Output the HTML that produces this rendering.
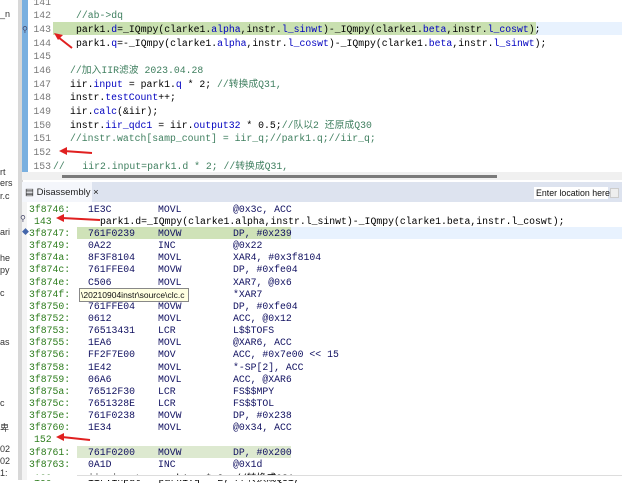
<!DOCTYPE html>
<html><head><meta charset="utf-8"><style>
*{margin:0;padding:0;box-sizing:border-box}
body{width:622px;height:480px;overflow:hidden;background:#fff;position:relative;font-family:"Liberation Mono","Noto Sans CJK SC",monospace;font-size:9.8px;line-height:13px}
.a{position:absolute;white-space:pre;line-height:13px;height:13px}
.ln{color:#787878;width:26px;text-align:right;left:25px}
.b{color:#0000c0}.c{color:#3f7f5f}
.ad{color:#2e7d1e;left:29px}
.op{left:88px;color:#101060}.mn{left:158px;color:#101060}.or{left:233px;color:#101060}
.lt{font-family:"Liberation Sans",sans-serif;font-size:9px;color:#333;left:0}
.bg{height:auto}
</style></head><body>
<div class="a bg" style="left:0;top:0;width:20px;height:480px;background:#fff"></div>
<div class="a bg" style="left:18px;top:0;width:5px;height:480px;background:#d8d8d8"></div>
<div class="a lt" style="top:8px">_n</div>
<div class="a lt" style="top:166px">rt</div>
<div class="a lt" style="top:177px">ers</div>
<div class="a lt" style="top:190px">r.c</div>
<div class="a lt" style="top:226px">ari</div>
<div class="a lt" style="top:252px">he</div>
<div class="a lt" style="top:264px">py</div>
<div class="a lt" style="top:287px">c</div>
<div class="a lt" style="top:336px">as</div>
<div class="a lt" style="top:397px">c</div>
<div class="a lt" style="top:422px">卑</div>
<div class="a lt" style="top:443px">02</div>
<div class="a lt" style="top:455px">02</div>
<div class="a lt" style="top:467px">1:</div>
<!-- editor -->
<div class="a bg" style="left:22px;top:0;width:6px;height:172px;background:#7ab0e0"></div>
<div class="a bg" style="left:53px;top:22px;width:569px;height:13px;background:#e8f2fe"></div>
<div class="a bg" style="left:53px;top:22px;width:483px;height:13px;background:#c9e0b0"></div>
<div class="a ln" style="top:-4px">141</div>
<div class="a ln" style="top:9px">142</div>
<div class="a ln" style="top:23px">143</div>
<div class="a ln" style="top:37px">144</div>
<div class="a ln" style="top:50px">145</div>
<div class="a ln" style="top:64px">146</div>
<div class="a ln" style="top:78px">147</div>
<div class="a ln" style="top:91px">148</div>
<div class="a ln" style="top:105px">149</div>
<div class="a ln" style="top:119px">150</div>
<div class="a ln" style="top:132px">151</div>
<div class="a ln" style="top:146px">152</div>
<div class="a ln" style="top:160px">153</div>
<div class="a" style="left:22px;top:24px;font-size:8px;color:#446">⚲</div>
<div class="a c" style="left:76px;top:9px">//ab-&gt;dq</div>
<div class="a" style="left:76px;top:23px">park1.<span class="b">d</span>=_IQmpy(clarke1.<span class="b">alpha</span>,instr.<span class="b">l_sinwt</span>)-_IQmpy(clarke1.<span class="b">beta</span>,instr.<span class="b">l_coswt</span>);</div>
<div class="a" style="left:76px;top:37px">park1.<span class="b">q</span>=-_IQmpy(clarke1.<span class="b">alpha</span>,instr.<span class="b">l_coswt</span>)-_IQmpy(clarke1.<span class="b">beta</span>,instr.<span class="b">l_sinwt</span>);</div>
<div class="a c" style="left:70px;top:64px">//加入IIR滤波 2023.04.28</div>
<div class="a" style="left:70px;top:78px">iir.<span class="b">input</span> = park1.<span class="b">q</span> * 2; <span class="c">//转换成Q31,</span></div>
<div class="a" style="left:70px;top:91px">instr.<span class="b">testCount</span>++;</div>
<div class="a" style="left:70px;top:105px">iir.<span class="b">calc</span>(&amp;iir);</div>
<div class="a" style="left:70px;top:119px">instr.<span class="b">iir_qdc1</span> = iir.<span class="b">output32</span> * 0.5;<span class="c">//队以2 还原成Q30</span></div>
<div class="a c" style="left:70px;top:132px">//instr.watch[samp_count] = iir_q;//park1.q;//iir_q;</div>
<div class="a c" style="left:53px;top:160px">//   iir2.input=park1.d * 2; //转换成Q31,</div>
<div class="a bg" style="left:22px;top:172px;width:600px;height:8px;background:#f0f0f0"></div>
<div class="a bg" style="left:62px;top:175px;width:435px;height:3px;background:#7a7a7a"></div>
<!-- disassembly tab -->
<div class="a bg" style="left:22px;top:182px;width:600px;height:20px;background:#dde3ef"></div>
<div class="a bg" style="left:22px;top:182px;width:70px;height:20px;background:#f4f6fb"></div>
<div class="a" style="left:25px;top:186px;font-family:'Liberation Sans',sans-serif;font-size:9.5px;color:#222">▤ Disassembly ×</div>
<div class="a" style="left:534px;top:187px;width:74px;height:12px;background:#fff;font-family:'Liberation Sans',sans-serif;font-size:8.8px;color:#111;padding-left:2px;line-height:12px">Enter location here</div>
<div class="a bg" style="left:610px;top:188px;width:9px;height:10px;background:#eee;border:1px solid #ccc"></div>
<div class="a bg" style="left:22px;top:202px;width:600px;height:278px;background:#fff"></div>
<div class="a bg" style="left:22px;top:202px;width:5px;height:278px;background:#f4f4f4"></div>
<!-- rows -->
<div class="a bg" style="left:77px;top:227px;width:545px;height:12px;background:#e8f2fe"></div>
<div class="a bg" style="left:77px;top:227px;width:214px;height:12px;background:#cfe2b8"></div>
<div class="a bg" style="left:77px;top:446px;width:214px;height:12px;background:#dde9d0"></div>
<div class="a" style="left:22px;top:227px;font-size:7px;color:#46a">◆</div>
<div class="a" style="left:20px;top:213px;font-size:8px;color:#446">⚲</div>

<div class="a ad" style="top:203px">3f8746:</div><div class="a op" style="top:203px">1E3C</div><div class="a mn" style="top:203px">MOVL</div><div class="a or" style="top:203px">@0x3c, ACC</div>
<div class="a ad" style="top:215px;left:34px">143</div><div class="a" style="left:100px;top:215px">park1.d=_IQmpy(clarke1.alpha,instr.l_sinwt)-_IQmpy(clarke1.beta,instr.l_coswt);</div>
<div class="a ad" style="top:227px">3f8747:</div><div class="a op" style="top:227px">761F0239</div><div class="a mn" style="top:227px">MOVW</div><div class="a or" style="top:227px">DP, #0x239</div>
<div class="a ad" style="top:239px">3f8749:</div><div class="a op" style="top:239px">0A22</div><div class="a mn" style="top:239px">INC</div><div class="a or" style="top:239px">@0x22</div>
<div class="a ad" style="top:251px">3f874a:</div><div class="a op" style="top:251px">8F3F8104</div><div class="a mn" style="top:251px">MOVL</div><div class="a or" style="top:251px">XAR4, #0x3f8104</div>
<div class="a ad" style="top:263px">3f874c:</div><div class="a op" style="top:263px">761FFE04</div><div class="a mn" style="top:263px">MOVW</div><div class="a or" style="top:263px">DP, #0xfe04</div>
<div class="a ad" style="top:276px">3f874e:</div><div class="a op" style="top:276px">C506</div><div class="a mn" style="top:276px">MOVL</div><div class="a or" style="top:276px">XAR7, @0x6</div>
<div class="a ad" style="top:288px">3f874f:</div><div class="a or" style="top:288px">*XAR7</div>
<div class="a" style="left:79px;top:288px;width:110px;height:14px;background:#ffffe1;border:1px solid #888;font-family:'Liberation Sans',sans-serif;font-size:8.5px;color:#111;padding-left:1px;line-height:12px">\20210904instr\source\clc.c</div>
<div class="a ad" style="top:300px">3f8750:</div><div class="a op" style="top:300px">761FFE04</div><div class="a mn" style="top:300px">MOVW</div><div class="a or" style="top:300px">DP, #0xfe04</div>
<div class="a ad" style="top:312px">3f8752:</div><div class="a op" style="top:312px">0612</div><div class="a mn" style="top:312px">MOVL</div><div class="a or" style="top:312px">ACC, @0x12</div>
<div class="a ad" style="top:324px">3f8753:</div><div class="a op" style="top:324px">76513431</div><div class="a mn" style="top:324px">LCR</div><div class="a or" style="top:324px">L$$TOFS</div>
<div class="a ad" style="top:336px">3f8755:</div><div class="a op" style="top:336px">1EA6</div><div class="a mn" style="top:336px">MOVL</div><div class="a or" style="top:336px">@XAR6, ACC</div>
<div class="a ad" style="top:348px">3f8756:</div><div class="a op" style="top:348px">FF2F7E00</div><div class="a mn" style="top:348px">MOV</div><div class="a or" style="top:348px">ACC, #0x7e00 &lt;&lt; 15</div>
<div class="a ad" style="top:361px">3f8758:</div><div class="a op" style="top:361px">1E42</div><div class="a mn" style="top:361px">MOVL</div><div class="a or" style="top:361px">*-SP[2], ACC</div>
<div class="a ad" style="top:373px">3f8759:</div><div class="a op" style="top:373px">06A6</div><div class="a mn" style="top:373px">MOVL</div><div class="a or" style="top:373px">ACC, @XAR6</div>
<div class="a ad" style="top:385px">3f875a:</div><div class="a op" style="top:385px">76512F30</div><div class="a mn" style="top:385px">LCR</div><div class="a or" style="top:385px">FS$$MPY</div>
<div class="a ad" style="top:397px">3f875c:</div><div class="a op" style="top:397px">7651328E</div><div class="a mn" style="top:397px">LCR</div><div class="a or" style="top:397px">FS$$TOL</div>
<div class="a ad" style="top:409px">3f875e:</div><div class="a op" style="top:409px">761F0238</div><div class="a mn" style="top:409px">MOVW</div><div class="a or" style="top:409px">DP, #0x238</div>
<div class="a ad" style="top:421px">3f8760:</div><div class="a op" style="top:421px">1E34</div><div class="a mn" style="top:421px">MOVL</div><div class="a or" style="top:421px">@0x34, ACC</div>
<div class="a ad" style="top:433px;left:34px">152</div>
<div class="a ad" style="top:446px">3f8761:</div><div class="a op" style="top:446px">761F0200</div><div class="a mn" style="top:446px">MOVW</div><div class="a or" style="top:446px">DP, #0x200</div>
<div class="a ad" style="top:458px">3f8763:</div><div class="a op" style="top:458px">0A1D</div><div class="a mn" style="top:458px">INC</div><div class="a or" style="top:458px">@0x1d</div>
<div class="a ad" style="top:472px;left:34px">160</div><div class="a" style="left:88px;top:472px">iir.input = park1.q * 2; //转换成Q31,</div>
<div class="a bg" style="left:27px;top:475px;width:595px;height:5px;background:#fff"></div>
<div class="a bg" style="left:77px;top:475px;width:545px;height:1px;background:#ddd"></div>
<!-- arrows -->
<svg class="a bg" style="left:0;top:0" width="622" height="480">
<g stroke="#e02020" stroke-width="2" fill="#e02020">
<line x1="72" y1="48" x2="58" y2="37"/><polygon points="54,33 63,35 58,40" stroke="none"/>
<line x1="92" y1="153" x2="64" y2="151"/><polygon points="59,151 67,147 67,155" stroke="none"/>
<line x1="100" y1="220" x2="62" y2="218"/><polygon points="56,218 64,214 64,222" stroke="none"/>
<line x1="90" y1="440" x2="62" y2="437"/><polygon points="56,437 64,433 64,441" stroke="none"/>
</g></svg>
</body></html>
